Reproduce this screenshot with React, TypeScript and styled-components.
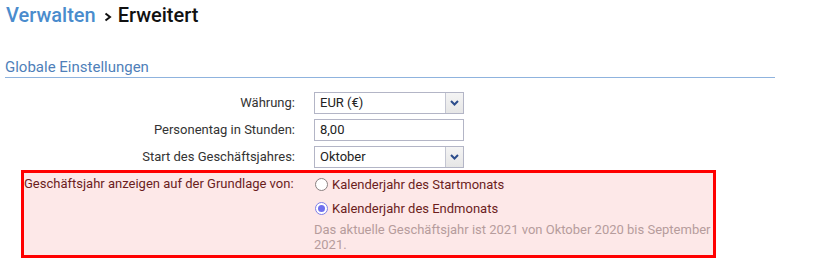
import React from "react";
import styled, { createGlobalStyle } from "styled-components";

const Global = createGlobalStyle`
  html, body { margin: 0; padding: 0; background: #ffffff; }
  body { font-family: Roboto, "Liberation Sans", Arial, sans-serif; color: #333333; }
  * { box-sizing: border-box; }
`;

const Page = styled.div`
  width: 818px;
  height: 270px;
  overflow: hidden;
`;

const Breadcrumb = styled.h1`
  margin: 3px 0 0 6px;
  font-size: 20px;
  line-height: 24px;
  font-weight: 500;
  display: flex;
  align-items: center;
`;

const Crumb = styled.span<{ $link?: boolean }>`
  color: ${(p) => (p.$link ? "#4a8ccd" : "#111111")};
`;

const Sep = styled.span`
  display: inline-flex;
  align-items: center;
  margin: 0 6px 0 8px;
  padding-top: 3px;
`;

const SectionTitle = styled.h2`
  margin: 30px 0 0 5px;
  width: 770px;
  font-size: 15px;
  line-height: 20px;
  font-weight: 400;
  color: #4f7fb9;
  border-bottom: 1px solid #8fb3de;
`;

const Form = styled.div`
  margin-top: 14px;
  padding-left: 24px;
  display: flex;
  flex-direction: column;
  gap: 5px;
`;

const Row = styled.div`
  display: flex;
  align-items: center;
  gap: 19px;
  height: 22px;
`;

const Label = styled.label<{ $error?: boolean }>`
  width: 271px;
  flex: none;
  text-align: right;
  font-size: 13px;
  line-height: 22px;
  color: ${(p) => (p.$error ? "#6b1d1d" : "#333333")};
  white-space: nowrap;
`;

const FieldBox = styled.div`
  width: 150px;
  height: 22px;
  border: 1px solid #b3b5c6;
  background: #ffffff;
  display: flex;
  align-items: stretch;
`;

const FieldText = styled.span`
  flex: 1;
  padding-left: 5px;
  font-size: 13px;
  line-height: 20px;
  color: #222222;
`;

const ArrowBtn = styled.span`
  width: 18px;
  flex: none;
  border-left: 1px solid #c4c6d2;
  background: linear-gradient(#f4f4f4, #e6e6e6);
  display: flex;
  align-items: center;
  justify-content: center;
`;

const ErrorBox = styled.div`
  margin: -3px 0 0 -3px;
  width: 695px;
  border: 3px solid #ff0000;
  background: #fde8e8;
  display: flex;
  gap: 19px;
  padding-bottom: 3px;
`;

const ErrorLabelCol = styled.div`
  width: 271px;
  flex: none;
`;

const Options = styled.div`
  flex: 1;
  display: flex;
  flex-direction: column;
  gap: 2px;
  padding-right: 2px;
`;

const Option = styled.label`
  display: flex;
  align-items: center;
  gap: 4px;
  height: 22px;
  font-size: 13px;
  color: #6b1d1d;
`;

const RadioDot = styled.span<{ $checked?: boolean }>`
  width: 13px;
  height: 13px;
  border-radius: 50%;
  flex: none;
  margin-left: 1px;
  background: #ffffff;
  border: 1px solid ${(p) => (p.$checked ? "#7e7ee6" : "#8a8080")};
  display: flex;
  align-items: center;
  justify-content: center;
  &::after {
    content: "";
    display: ${(p) => (p.$checked ? "block" : "none")};
    width: 7px;
    height: 7px;
    border-radius: 50%;
    background: #6f6fee;
  }
`;

const Help = styled.div`
  margin-top: 1px;
  font-size: 13px;
  line-height: 15px;
  color: #b69c9c;
`;

const Chevron = () => (
  <svg width="9" height="6" viewBox="0 0 9 6">
    <path d="M1 1 L4.5 4.5 L8 1" fill="none" stroke="#2c4d8c" strokeWidth="2" />
  </svg>
);

const Gt = () => (
  <svg width="8" height="10" viewBox="0 0 8 10">
    <path d="M1.5 1.5 L6 5 L1.5 8.5" fill="none" stroke="#111" strokeWidth="2" />
  </svg>
);

export default function App() {
  return (
    <Page>
      <Global />
      <Breadcrumb>
        <Crumb $link>Verwalten</Crumb>
        <Sep>
          <Gt />
        </Sep>
        <Crumb>Erweitert</Crumb>
      </Breadcrumb>
      <SectionTitle>Globale Einstellungen</SectionTitle>
      <Form>
        <Row>
          <Label>Währung:</Label>
          <FieldBox>
            <FieldText>EUR (€)</FieldText>
            <ArrowBtn>
              <Chevron />
            </ArrowBtn>
          </FieldBox>
        </Row>
        <Row>
          <Label>Personentag in Stunden:</Label>
          <FieldBox>
            <FieldText>8,00</FieldText>
          </FieldBox>
        </Row>
        <Row>
          <Label>Start des Geschäftsjahres:</Label>
          <FieldBox>
            <FieldText>Oktober</FieldText>
            <ArrowBtn>
              <Chevron />
            </ArrowBtn>
          </FieldBox>
        </Row>
        <ErrorBox>
          <ErrorLabelCol>
            <Label $error>Geschäftsjahr anzeigen auf der Grundlage von:</Label>
          </ErrorLabelCol>
          <Options>
            <Option>
              <RadioDot />
              Kalenderjahr des Startmonats
            </Option>
            <Option>
              <RadioDot $checked />
              Kalenderjahr des Endmonats
            </Option>
            <Help>
              Das aktuelle Geschäftsjahr ist 2021 von Oktober 2020 bis September 2021.
            </Help>
          </Options>
        </ErrorBox>
      </Form>
    </Page>
  );
}
